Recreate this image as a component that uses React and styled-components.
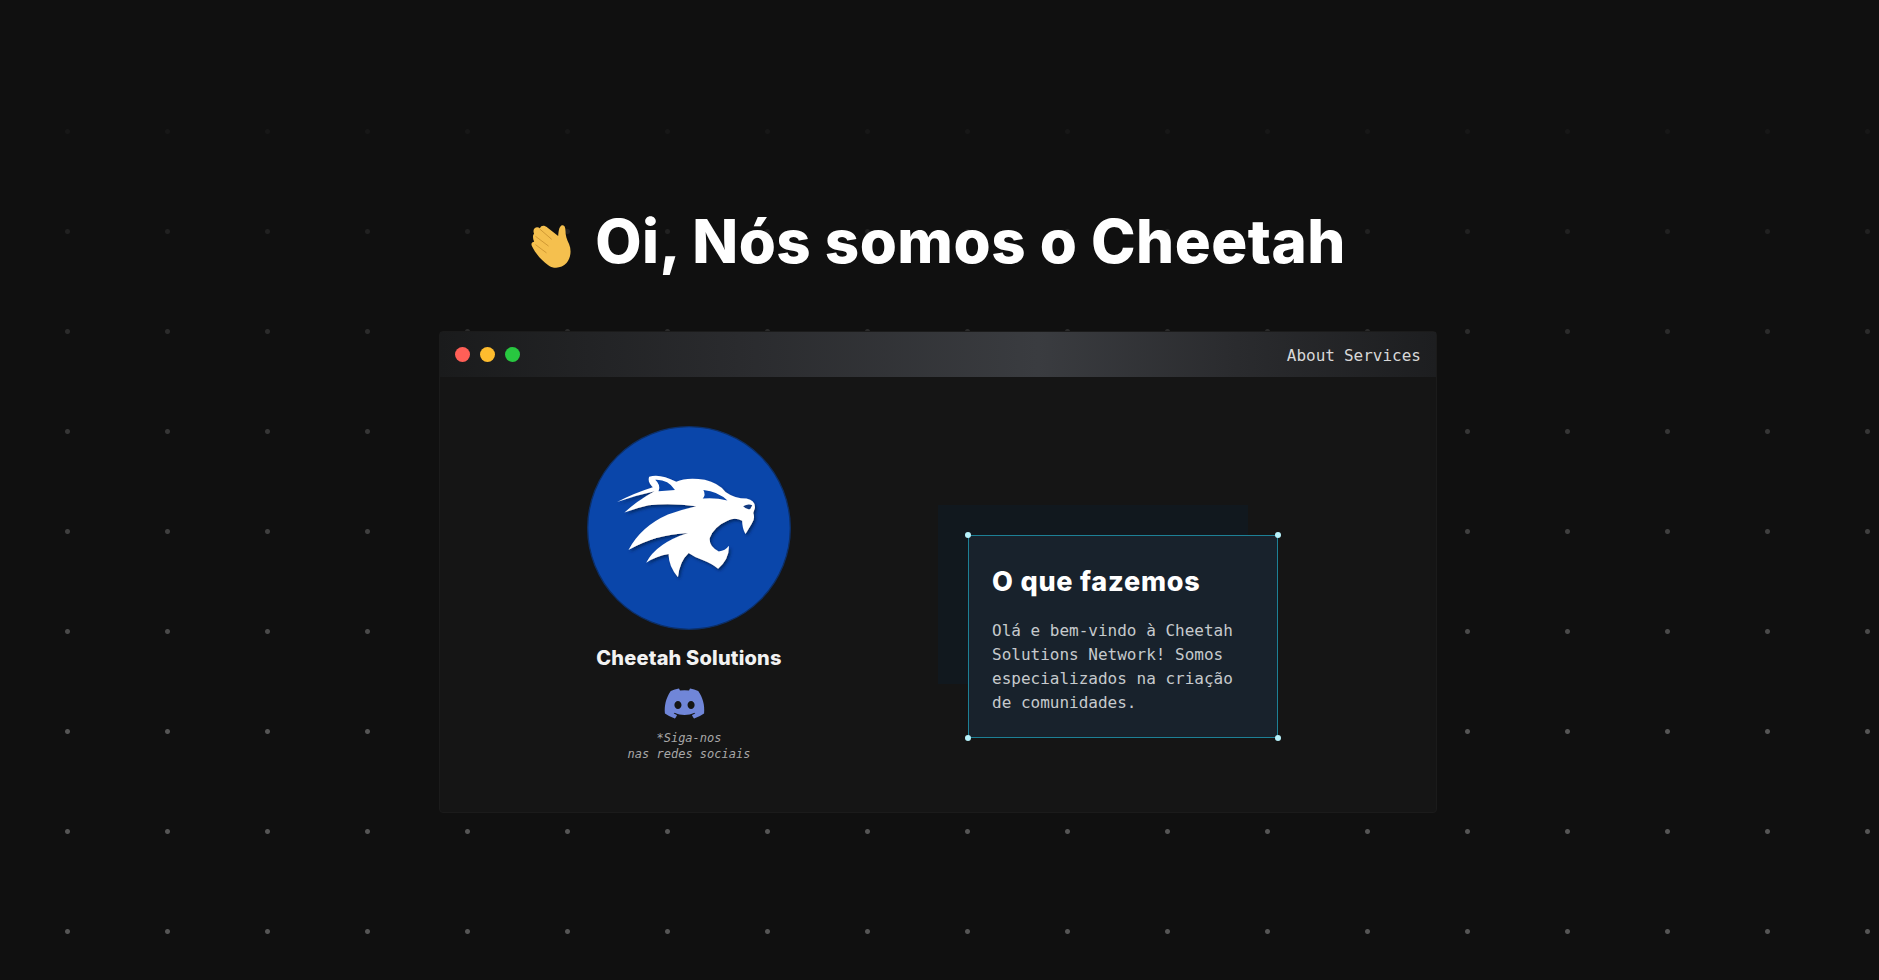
import React from 'react'
import styled, { createGlobalStyle } from 'styled-components'
import { FaDiscord } from 'react-icons/fa'

const Global = createGlobalStyle`
  html, body {
    margin: 0;
    padding: 0;
    background: #101010;
  }
`

const Page = styled.div`
  position: relative;
  height: 980px;
  overflow: hidden;
  background: #101010;
  display: flex;
  flex-direction: column;
  align-items: center;
  padding: 207px 3px 0 0;
  box-sizing: border-box;

  &::before {
    content: '';
    position: absolute;
    inset: 0;
    background-image: radial-gradient(circle at 67.5px 31.5px, #555 0, #555 2px, transparent 3px);
    background-size: 100px 100px;
    -webkit-mask-image: linear-gradient(to bottom, transparent 60px, #000 75%);
    mask-image: linear-gradient(to bottom, transparent 60px, #000 75%);
  }
`

const Title = styled.h1`
  position: relative;
  margin: 0 0 56px;
  height: 68px;
  display: flex;
  align-items: center;
  gap: 17px;
  font-family: Inter, sans-serif;
  font-weight: 800;
  font-size: 60px;
  line-height: 68px;
  letter-spacing: 0.5px;
  color: #fff;
`

const ClapIcon = styled.svg`
  width: 48px;
  height: 48px;
  margin-top: 15px;
`

const Window = styled.div`
  position: relative;
  width: 998px;
  height: 482px;
  background: #151515;
  border: 1px solid #1b1b1b;
  border-radius: 4px;
  box-sizing: border-box;
  display: flex;
  flex-direction: column;
`

const TitleBar = styled.div`
  height: 45px;
  flex: none;
  display: flex;
  align-items: center;
  justify-content: space-between;
  padding: 0 15px;
  background: linear-gradient(to right, #1a1b1c 0%, #2a2b2e 30%, #3a3c40 60%, #2a2b2e 80%, #1d1e20 100%);
`

const Lights = styled.div`
  display: flex;
  gap: 10px;
`

const Light = styled.span`
  width: 15px;
  height: 15px;
  border-radius: 50%;
  background: ${p => p.$color};
`

const Nav = styled.nav`
  display: flex;
  gap: 9px;
  padding-top: 2px;
  font-family: 'DejaVu Sans Mono', monospace;
  font-size: 16px;
  color: #d8d8d8;
`

const Body = styled.div`
  flex: 1;
  display: grid;
  grid-template-columns: 1fr 1fr;
`

const Profile = styled.div`
  display: flex;
  flex-direction: column;
  align-items: center;
  padding-top: 49px;
`

const Logo = styled.svg`
  width: 204px;
  height: 204px;
  display: block;
`

const Name = styled.div`
  margin-top: 15px;
  font-family: Inter, sans-serif;
  font-weight: 800;
  font-size: 20px;
  line-height: 26px;
  letter-spacing: 0.2px;
  color: #f2f2f2;
`

const DiscordLink = styled.a`
  display: block;
  margin: 11px 10px 0 0;
  height: 40px;
  color: #7086d8;
  font-size: 43px;
  line-height: 0;
`

const Note = styled.p`
  margin: 8px 0 0;
  text-align: center;
  font-family: 'DejaVu Sans Mono', monospace;
  font-style: italic;
  font-size: 12px;
  line-height: 16px;
  color: #a8a8a8;
`

const Services = styled.div`
  padding-top: 128px;
`

const CardStack = styled.div`
  position: relative;
  padding: 30px 0 0 30px;
  width: 310px;
`

const BackPanel = styled.div`
  position: absolute;
  left: 0;
  top: 0;
  width: 310px;
  height: 179px;
  background: #11181e;
`

const Card = styled.div`
  position: relative;
  width: 310px;
  height: 203px;
  box-sizing: border-box;
  padding: 30px 23px 0;
  background: #18222c;
  border: 1px solid #1d8096;
`

const Handle = styled.span`
  position: absolute;
  width: 6px;
  height: 6px;
  border-radius: 50%;
  background: #b8f2fb;
  ${p => (p.$top ? 'top: -4px;' : 'bottom: -4px;')}
  ${p => (p.$left ? 'left: -4px;' : 'right: -4px;')}
`

const CardTitle = styled.h2`
  margin: 0 0 21px;
  font-family: Inter, sans-serif;
  font-weight: 800;
  font-size: 27px;
  line-height: 32px;
  letter-spacing: 0.8px;
  color: #fff;
`

const CardText = styled.p`
  margin: 0;
  font-family: 'DejaVu Sans Mono', monospace;
  font-size: 16px;
  line-height: 24px;
  color: #c6cacd;
  white-space: nowrap;
`

const Clap = () => (
  <ClapIcon viewBox="5 8 84 92">
    <path
      fill="#f5c04e"
      d="M8 22c-2-8 6-12 12-8 2-6 9-6 13-2l22 17c1-8 1-16 6-20 6-3 8 4 8 10 0 8 2 16 7 26 5 12 3 26-5 36-9 10-24 12-35 4-13-9-24-22-31-36-3-5 0-9 4-9-3-6-3-13 0-15-1-1-1-2-1-3z"
    />
    <path
      fill="none"
      stroke="#c9922f"
      strokeWidth="1.6"
      strokeLinecap="round"
      d="M20 16l22 19M12 30l24 18M12 46l20 15"
    />
  </ClapIcon>
)

const CheetahLogo = () => (
  <Logo viewBox="48 45 610 610">
    <defs>
      <filter id="shade" x="-20%" y="-20%" width="140%" height="140%">
        <feDropShadow dx="5" dy="6" stdDeviation="4" floodColor="#06245c" floodOpacity="0.9" />
      </filter>
    </defs>
    <circle cx="353" cy="350" r="303" fill="#0a46aa" stroke="#0d2f66" strokeWidth="4" />
    <path
      filter="url(#shade)"
      fill="#fff"
      d="M138 272 Q190 245 245 228 Q228 212 234 197 Q265 186 315 212 Q345 198 400 206 Q440 215 462 242 Q490 262 525 262 Q552 268 550 290 L545 305 Q552 322 540 338 L522 368 Q512 350 512 328 Q490 316 468 328 Q428 345 415 380 Q412 405 442 420 Q462 418 472 403 Q475 440 440 472 Q425 458 392 445 Q370 438 352 425 Q325 450 320 497 Q292 465 292 428 Q255 434 225 454 Q255 395 350 365 Q250 370 172 416 Q210 345 290 310 Q330 295 375 285 Q300 275 232 282 Q195 290 160 304 Q195 270 250 240 Q195 252 138 272 Z"
    />
    <path fill="#0a46aa" d="M252 206 Q290 204 311 236 L262 240 Q270 222 252 206 Z" />
    <path fill="#0a46aa" d="M396 236 Q440 240 468 268 Q430 258 394 262 Q404 250 396 236 Z" />
    <path fill="#123a80" d="M515 285 Q530 276 542 282 L536 293 Q525 296 515 285 Z" />
  </Logo>
)

const corners = [
  { $top: true, $left: true },
  { $top: true },
  { $left: true },
  {},
]

export default function App() {
  return (
    <Page>
      <Global />
      <Title>
        <Clap />
        Oi, Nós somos o Cheetah
      </Title>
      <Window>
        <TitleBar>
          <Lights>
            <Light $color="#ff5f57" />
            <Light $color="#febc2e" />
            <Light $color="#28c840" />
          </Lights>
          <Nav>
            <span>About</span>
            <span>Services</span>
          </Nav>
        </TitleBar>
        <Body>
          <Profile>
            <CheetahLogo />
            <Name>Cheetah Solutions</Name>
            <DiscordLink>
              <FaDiscord />
            </DiscordLink>
            <Note>
              *Siga-nos
              <br />
              nas redes sociais
            </Note>
          </Profile>
          <Services>
            <CardStack>
              <BackPanel />
              <Card>
                {corners.map((c, i) => (
                  <Handle key={i} {...c} />
                ))}
                <CardTitle>O que fazemos</CardTitle>
                <CardText>
                  Olá e bem-vindo à Cheetah
                  <br />
                  Solutions Network! Somos
                  <br />
                  especializados na criação
                  <br />
                  de comunidades.
                </CardText>
              </Card>
            </CardStack>
          </Services>
        </Body>
      </Window>
    </Page>
  )
}
